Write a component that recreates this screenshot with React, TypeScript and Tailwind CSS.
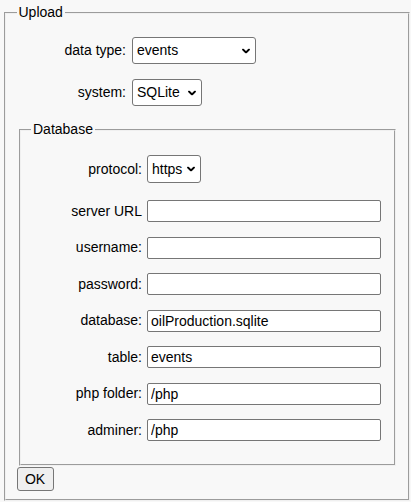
import { ReactNode } from "react";

function Chevron() {
  return (
    <svg
      width="8"
      height="5"
      viewBox="0 0 8 5"
      className="pointer-events-none absolute right-[6px] top-1/2 -translate-y-1/2"
    >
      <path d="M1 1 L4 4 L7 1" fill="none" stroke="#000" strokeWidth="1.8" strokeLinecap="round" strokeLinejoin="round" />
    </svg>
  );
}

function Select({ value, className }: { value: string; className: string }) {
  return (
    <div className={`relative ${className}`}>
      <select
        defaultValue={value}
        className="h-full w-full appearance-none rounded-[3px] border border-[#767676] bg-white pl-[4px] pr-[16px] text-black outline-none"
      >
        <option>{value}</option>
      </select>
      <Chevron />
    </div>
  );
}

function Row({ label, labelWidth, className, children }: { label: string; labelWidth: string; className: string; children: ReactNode }) {
  return (
    <div className={`flex items-center ${className}`}>
      <label className={`${labelWidth} shrink-0 text-right`}>{label}</label>
      {children}
    </div>
  );
}

function Field({ label, value = "", className }: { label: string; value?: string; className: string }) {
  return (
    <Row label={label} labelWidth="w-[111px] mr-[5px]" className={`h-[22px] ${className}`}>
      <input
        defaultValue={value}
        className="h-[22px] w-[234px] rounded-[2px] border border-[#767676] bg-white pl-[3px] text-black outline-none"
      />
    </Row>
  );
}

export default function App() {
  return (
    <div className="min-h-screen bg-[#f8f8f8] pt-[2px] pl-[4px] font-['Liberation_Sans',Arial,sans-serif] text-[14px] leading-normal text-black">
      <fieldset className="w-[406px] border-2 border-[#f0f0f0] [border-style:groove] px-[10.5px] pt-[5px] pb-[8px]">
        <legend className="px-[2px]">Upload</legend>

        <Row label="data type:" labelWidth="w-[109.5px] mr-[6px]" className="mt-[9px] h-[27px]">
          <Select value="events" className="h-[27px] w-[124px]" />
        </Row>
        <Row label="system:" labelWidth="w-[109.5px] mr-[6px]" className="mt-[15px] h-[27px]">
          <Select value="SQLite" className="h-[27px] w-[70px]" />
        </Row>

        <fieldset className="mx-[2px] mt-[13px] border-2 border-[#f0f0f0] [border-style:groove] px-[10.5px] pt-[5px] pb-[9px]">
          <legend className="px-[2px]">Database</legend>

          <Row label="protocol:" labelWidth="w-[111px] mr-[5px]" className="mt-[10px] h-[28px]">
            <Select value="https" className="h-[28px] w-[54px]" />
          </Row>
          <Field label="server URL" className="mt-[17px]" />
          <Field label="username:" className="mt-[14.5px]" />
          <Field label="password:" className="mt-[14.5px]" />
          <Field label="database:" value="oilProduction.sqlite" className="mt-[14.5px]" />
          <Field label="table:" value="events" className="mt-[14.5px]" />
          <Field label="php folder:" value="/php" className="mt-[14.5px]" />
          <Field label="adminer:" value="/php" className="mt-[14.5px] mb-[14px]" />
        </fieldset>

        <button className="mt-[1px] block h-[24px] w-[37px] rounded-[3px] border border-[#767676] bg-[#efefef] text-black">
          OK
        </button>
      </fieldset>
    </div>
  );
}
